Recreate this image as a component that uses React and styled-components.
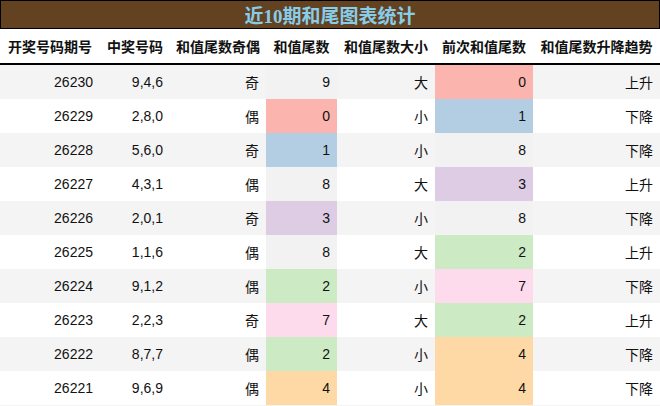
import React from "react";
import styled, { createGlobalStyle } from "styled-components";

const GlobalStyle = createGlobalStyle`
  body {
    margin: 0;
    background: #f4f4f4;
    font-family: "Liberation Sans", "Noto Sans CJK SC", sans-serif;
  }
`;

const columns = [
  { title: "开奖号码期号", width: 100 },
  { title: "中奖号码", width: 70 },
  { title: "和值尾数奇偶", width: 96 },
  { title: "和值尾数", width: 71 },
  { title: "和值尾数大小", width: 98 },
  { title: "前次和值尾数", width: 98 },
  { title: "和值尾数升降趋势", width: 127 },
];

// Pastel1 风格的尾数配色
const tailColors = {
  0: "#fbb4ae",
  1: "#b3cde3",
  2: "#ccebc5",
  3: "#decbe4",
  4: "#fed9a6",
  7: "#fddaec",
  8: "#f2f2f2",
  9: "#f2f2f2",
};

const rows = [
  ["26230", "9,4,6", "奇", 9, "大", 0, "上升"],
  ["26229", "2,8,0", "偶", 0, "小", 1, "下降"],
  ["26228", "5,6,0", "奇", 1, "小", 8, "下降"],
  ["26227", "4,3,1", "偶", 8, "大", 3, "上升"],
  ["26226", "2,0,1", "奇", 3, "小", 8, "下降"],
  ["26225", "1,1,6", "偶", 8, "大", 2, "上升"],
  ["26224", "9,1,2", "偶", 2, "小", 7, "下降"],
  ["26223", "2,2,3", "奇", 7, "大", 2, "上升"],
  ["26222", "8,7,7", "偶", 2, "小", 4, "下降"],
  ["26221", "9,6,9", "偶", 4, "小", 4, "下降"],
];

const Wrapper = styled.div`
  width: 660px;
  background: #fff;
`;

const TitleBar = styled.div`
  height: 27px;
  background: #634221;
  border: 1px solid #000;
  display: flex;
  align-items: center;
  justify-content: center;
  color: #87cdea;
  font-family: "Liberation Serif", "Noto Sans CJK SC", serif;
  font-weight: 700;
  font-size: 19px;
`;

const Table = styled.table`
  width: 660px;
  border-collapse: collapse;
  table-layout: fixed;
`;

const HeadCell = styled.th`
  height: 34px;
  padding: 0;
  text-align: center;
  font-size: 14px;
  font-weight: 700;
  color: #111;
  background: #fff;
  border-bottom: 2px solid #000;
  white-space: nowrap;
`;

const Row = styled.tr`
  background: ${(p) => (p.$striped ? "#f4f4f4" : "#fff")};
`;

const Cell = styled.td`
  height: 34px;
  padding: 0 7px 0 0;
  text-align: right;
  font-size: 14px;
  color: #111;
  background: ${(p) => p.$bg || "transparent"};
  white-space: nowrap;
`;

const App = () => (
  <Wrapper>
    <GlobalStyle />
    <TitleBar>近10期和尾图表统计</TitleBar>
    <Table>
      <colgroup>
        {columns.map((c) => (
          <col key={c.title} style={{ width: c.width }} />
        ))}
      </colgroup>
      <thead>
        <tr>
          {columns.map((c) => (
            <HeadCell key={c.title}>{c.title}</HeadCell>
          ))}
        </tr>
      </thead>
      <tbody>
        {rows.map((r, i) => (
          <Row key={r[0]} $striped={i % 2 === 0}>
            <Cell>{r[0]}</Cell>
            <Cell>{r[1]}</Cell>
            <Cell>{r[2]}</Cell>
            <Cell $bg={tailColors[r[3]]}>{r[3]}</Cell>
            <Cell>{r[4]}</Cell>
            <Cell $bg={tailColors[r[5]]}>{r[5]}</Cell>
            <Cell>{r[6]}</Cell>
          </Row>
        ))}
      </tbody>
    </Table>
  </Wrapper>
);

export default App;
